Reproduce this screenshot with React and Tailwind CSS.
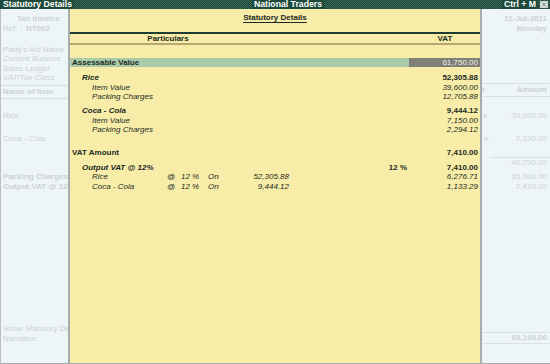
import React from "react";

function TitleBar() {
  return (
    <div className="h-[9px] flex items-center text-white font-bold text-[8.7px] leading-[9px] bg-[#1f4c3d] bg-[conic-gradient(#1a4536_25%,#3b6c59_0_50%,#1a4536_0_75%,#3b6c59_0)] bg-size-[2px_2px]">
      <span className="bg-[#1d4a3a] pl-[3px] pr-[2px] h-[9px]">Statutory Details</span>
      <div className="flex-1" />
      <span className="bg-[#1d4a3a] px-[2px] h-[9px]">National Traders</span>
      <div className="flex-1" />
      <span className="bg-[#1d4a3a] px-[2px] h-[9px]">Ctrl + M</span>
      <span className="ml-[2px] mr-[2px] w-[8px] h-[7px] border border-[#c9d4cf] bg-[#e6ecea] flex items-center justify-center">
        <svg width="6" height="5" viewBox="0 0 6 5">
          <path d="M1 0.5 L5 4.5 M5 0.5 L1 4.5" stroke="#5d6c66" strokeWidth="1" />
        </svg>
      </span>
    </div>
  );
}

function LeftPanel() {
  return (
    <div className="w-[70px] shrink-0 bg-[#eef5f6] border-l border-r-2 border-l-[#b9c0bf] border-r-[#a6adac] text-[8px] text-[#cbd2d4] whitespace-nowrap overflow-hidden">
      <div className="pt-[4.5px]">
        <div className="h-[10px] leading-[10px] font-bold pl-[16px]">Tax Invoice</div>
        <div className="h-[10px] leading-[10px] pl-[2px] flex">
          <span className="w-[23px]">Ref. :</span>
          <span className="font-bold">NT002</span>
        </div>
      </div>
      <div className="mt-[11px] pl-[2px]">
        <div className="h-[9.5px] leading-[9.5px]">Party's A/c Name</div>
        <div className="h-[9.5px] leading-[9.5px] italic">Current Balance</div>
        <div className="h-[9.5px] leading-[9.5px]">Sales Ledger</div>
        <div className="h-[9.5px] leading-[9.5px] italic">VAT/Tax Class</div>
      </div>
      <div className="mt-[2.5px] border-t border-b border-[#d9e0e1] h-[14px] leading-[12px] pl-[2px] font-bold">
        Name of Item
      </div>
      <div className="mt-[12px] h-[10px] leading-[10px] pl-[2px]">Rice</div>
      <div className="mt-[13px] h-[10px] leading-[10px] pl-[2px]">Coca - Cola</div>
      <div className="mt-[28px] h-[10px] leading-[10px] pl-[2px] font-bold">Packing Charges</div>
      <div className="h-[10px] leading-[10px] pl-[2px] font-bold">Output VAT @ 12%</div>
      <div className="mt-[132px] h-[10px] leading-[10px] pl-[2px]">Show Statutory Details</div>
      <div className="h-[10px] leading-[10px] pl-[2px]">Narration:</div>
    </div>
  );
}

function RightPanel() {
  return (
    <div className="w-[70px] shrink-0 bg-[#eef5f6] border-l-2 border-[#a6adac] text-[8px] text-[#cbd2d4] whitespace-nowrap overflow-hidden">
      <div className="pt-[4.5px] pr-[3px] text-right font-bold">
        <div className="h-[10px] leading-[10px]">11-Jul-2011</div>
        <div className="h-[10px] leading-[10px]">Monday</div>
      </div>
      <div className="mt-[49.5px] border-t border-b border-[#d9e0e1] h-[14px] leading-[12px] flex justify-between pr-[3px] font-bold">
        <span>r</span>
        <span>Amount</span>
      </div>
      <div className="mt-[14px] h-[10px] leading-[10px] flex justify-between pr-[3px] pl-[1px]">
        <span>s</span>
        <span>39,600.00</span>
      </div>
      <div className="mt-[13px] h-[10px] leading-[10px] flex justify-between pr-[3px] pl-[2px]">
        <span>x</span>
        <span>7,150.00</span>
      </div>
      <div className="mt-[13px] ml-[8px] border-t border-[#d9e0e1]" />
      <div className="h-[10px] leading-[10px] text-right pr-[3px]">46,750.00</div>
      <div className="mt-[4px] h-[10px] leading-[10px] text-right pr-[3px]">15,000.00</div>
      <div className="h-[10px] leading-[10px] text-right pr-[3px]">7,410.00</div>
      <div className="mt-[140px] border-t border-b border-[#d9e0e1] h-[12px] leading-[10px] text-right pr-[3px] font-bold">
        69,160.00
      </div>
    </div>
  );
}

function MainRow({ label, amount, indent, labelCls = "", amountCls = "" }) {
  return (
    <div className="h-[9.5px] leading-[9.5px] flex">
      <span className={`flex-1 ${indent} ${labelCls}`}>{label}</span>
      <span className={`pr-[2px] ${amountCls}`}>{amount}</span>
    </div>
  );
}

function SubRow({ item, on, amount }) {
  return (
    <div className="h-[9.5px] leading-[9.5px] flex italic">
      <span className="w-[97px] pl-[22px]">{item}</span>
      <span className="w-[14px]">@</span>
      <span className="w-[27px]">12 %</span>
      <span className="w-[20px]">On</span>
      <span className="w-[61px] text-right">{on}</span>
      <span className="flex-1 text-right pr-[2px]">{amount}</span>
    </div>
  );
}

function Statutory() {
  return (
    <div className="flex-1 bg-[#f7eda8] text-[8px] text-[#1c2a24]">
      <div className="pt-[4px] h-[14px] leading-[10px] text-center font-bold">
        <span className="underline underline-offset-[1.5px]">Statutory Details</span>
      </div>
      <div className="mt-[9px] h-[2px] bg-[#1f3e33]" />
      <div className="h-[9px] leading-[9px] flex font-bold">
        <span className="w-[196px] text-center">Particulars</span>
        <span className="flex-1" />
        <span className="w-[70px] text-center">VAT</span>
      </div>
      <div className="h-[2px] bg-[#b6a76e]" />
      <div className="mt-[13px] h-[9px] leading-[9px] flex font-bold">
        <span className="flex-1 bg-[#a9cba9] pl-[2px]">Assessable Value</span>
        <span className="w-[71px] bg-[#808078] text-right pr-[2px] text-[#eeeee4] font-normal">61,750.00</span>
      </div>

      <div className="mt-[6px]">
        <MainRow label="Rice" amount="52,305.88" indent="pl-[12px]" labelCls="font-bold italic" amountCls="font-bold" />
        <MainRow label="Item Value" amount="39,600.00" indent="pl-[22px]" labelCls="italic" amountCls="italic" />
        <MainRow label="Packing Charges" amount="12,705.88" indent="pl-[22px]" labelCls="italic" amountCls="italic" />
      </div>
      <div className="mt-[4.5px]">
        <MainRow label="Coca - Cola" amount="9,444.12" indent="pl-[12px]" labelCls="font-bold italic" amountCls="font-bold" />
        <MainRow label="Item Value" amount="7,150.00" indent="pl-[22px]" labelCls="italic" amountCls="italic" />
        <MainRow label="Packing Charges" amount="2,294.12" indent="pl-[22px]" labelCls="italic" amountCls="italic" />
      </div>
      <div className="mt-[13.5px]">
        <MainRow label="VAT Amount" amount="7,410.00" indent="pl-[2px]" labelCls="font-bold" amountCls="font-bold" />
      </div>
      <div className="mt-[5px]">
        <div className="h-[9.5px] leading-[9.5px] flex font-bold">
          <span className="flex-1 pl-[12px] italic">Output VAT @ 12%</span>
          <span className="w-[60px] text-right">12 %</span>
          <span className="w-[73px] text-right pr-[2px]">7,410.00</span>
        </div>
        <SubRow item="Rice" on="52,305.88" amount="6,276.71" />
        <SubRow item="Coca - Cola" on="9,444.12" amount="1,133.29" />
      </div>
    </div>
  );
}

export default function App() {
  return (
    <div className="w-[550px] h-[364px] flex flex-col overflow-hidden bg-[#eef5f6] font-['Liberation_Sans',Arial,sans-serif]">
      <TitleBar />
      <div className="flex flex-1 min-h-0 border-b border-[#a6adac]">
        <LeftPanel />
        <Statutory />
        <RightPanel />
      </div>
    </div>
  );
}
